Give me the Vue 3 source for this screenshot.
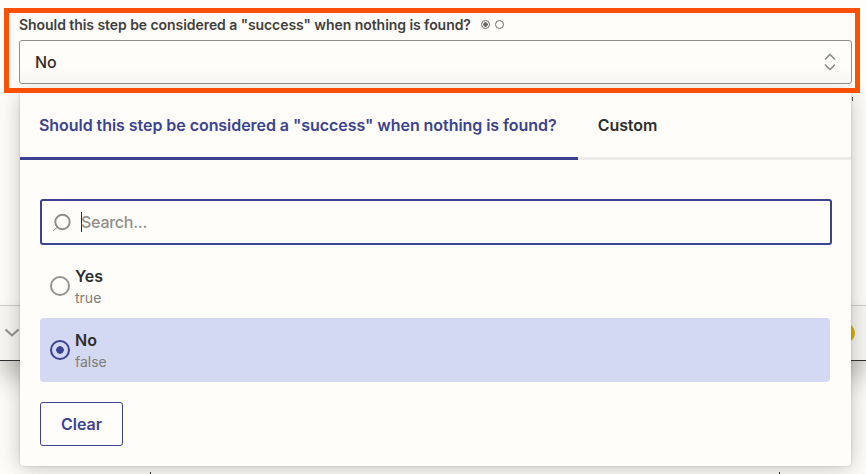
<script setup>
import { ref } from 'vue';

const title = 'Should this step be considered a "success" when nothing is found?';
const selected = ref('No');
const options = [
  { label: 'Yes', value: 'true' },
  { label: 'No', value: 'false' },
];
</script>

<template>
  <div class="page">
    <div class="field">
      <div class="label-row">
        <span class="label">{{ title }}</span>
        <span class="dots"><i class="dot dot-on"></i><i class="dot"></i></span>
      </div>
      <div class="select">
        <span>{{ selected }}</span>
        <svg width="14" height="20" viewBox="0 0 14 20" fill="none" stroke="#8f8e8a" stroke-width="1.6">
          <path d="M2 7.5 7 2.5l5 5" />
          <path d="M2 12.5l5 5 5-5" />
        </svg>
      </div>
    </div>

    <div class="behind">
      <svg width="16" height="10" viewBox="0 0 16 10" fill="none" stroke="#8f8e8a" stroke-width="2">
        <path d="M1.5 1.5 8 7.5l6.500-6" />
      </svg>
      <span class="coin"></span>
    </div>

    <!-- bits of the page underneath that peek out around the menu -->
    <span class="speck"></span>
    <span class="tick tick-left"></span>
    <span class="tick tick-right"></span>

    <div class="menu">
      <div class="tabs">
        <div class="tab tab-active">{{ title }}</div>
        <div class="tab">Custom</div>
      </div>
      <div class="search">
        <svg width="20" height="20" viewBox="0 0 20 20" fill="none" stroke="#8f8e8a" stroke-width="2">
          <circle cx="10.500" cy="10" r="7.200" />
          <path d="M5.500 15 1 19" stroke-width="1" />
        </svg>
        <span class="caret"></span>
        <span class="placeholder">Search...</span>
      </div>
      <div class="options">
        <div
          v-for="opt in options"
          :key="opt.label"
          class="option"
          :class="{ 'option-on': opt.label === selected }"
        >
          <span class="radio"></span>
          <div>
            <div class="opt-label">{{ opt.label }}</div>
            <div class="opt-value">{{ opt.value }}</div>
          </div>
        </div>
      </div>
      <button class="clear">Clear</button>
    </div>
  </div>
</template>

<style>
html, body {
  margin: 0;
  background: #fffdf9;
}
</style>

<style scoped>
.page {
  position: relative;
  width: 866px;
  height: 474px;
  overflow: hidden;
  padding-top: 8px;
  box-sizing: border-box;
  background: #fffdf9;
  font-family: Inter, "Liberation Sans", sans-serif;
  color: #2d2e2e;
}

.field {
  position: relative;
  z-index: 2;
  box-sizing: border-box;
  width: 856px;
  height: 85px;
  margin-left: 4px;
  padding: 3px 3px 0 10px;
  border: 5px solid #ff4f00;
}
.label-row {
  display: flex;
  align-items: center;
  height: 17px;
  gap: 10px;
}
.label {
  font-size: 14px;
  font-weight: 600;
  letter-spacing: -0.06px;
  color: #403f3e;
  white-space: nowrap;
}
.dots {
  display: flex;
  gap: 5px;
}
.dot {
  box-sizing: border-box;
  width: 9px;
  height: 9px;
  border: 1px solid #6b6a68;
  border-radius: 50%;
}
.dot-on {
  background: radial-gradient(circle, #6b6a68 0 2px, transparent 2.500px);
}
.select {
  display: flex;
  align-items: center;
  justify-content: space-between;
  box-sizing: border-box;
  height: 44px;
  margin-top: 7px;
  padding: 0 14px 0 15px;
  border: 1px solid #8f8e8a;
  border-radius: 3px;
  font-size: 16px;
  font-weight: 500;
  background: linear-gradient(#fffdf9 60%, #f8f6f2);
}

.behind {
  display: flex;
  align-items: center;
  justify-content: space-between;
  box-sizing: border-box;
  height: 56px;
  margin-top: 212px;
  padding: 0 11px 0 4px;
  border-top: 1px solid #cfcecb;
  border-bottom: 1px solid #2d2e2e;
  background: #f7f6f2;
  box-shadow: 0 16px 24px rgba(60, 58, 50, 0.3);
}
.coin {
  width: 20px;
  height: 20px;
  border-radius: 50%;
  background: #dcae00;
}
.speck {
  position: absolute;
  left: 852px;
  top: 97px;
  width: 1px;
  height: 4px;
  background: #55544f;
}
.tick {
  position: absolute;
  bottom: 0;
  width: 1px;
  height: 2px;
  background: #2d2e2e;
}
.tick-left {
  left: 150px;
}
.tick-right {
  left: 779px;
}

.menu {
  position: absolute;
  z-index: 1;
  left: 20px;
  top: 93px;
  box-sizing: border-box;
  width: 831px;
  height: 373px;
  padding-bottom: 20px;
  border-radius: 0 0 3px 3px;
  background: #fffdf9;
  box-shadow: 0 2px 22px rgba(60, 58, 50, 0.3), 0 0 2px rgba(60, 58, 50, 0.3);
}
.tabs {
  display: flex;
  box-sizing: border-box;
  height: 67px;
  border-bottom: 3px solid #ecebe7;
}
.tab {
  display: flex;
  align-items: center;
  box-sizing: border-box;
  height: 67px;
  padding: 0 20px;
  border-bottom: 3px solid transparent;
  font-size: 16px;
  font-weight: 600;
  letter-spacing: -0.05px;
  white-space: nowrap;
}
.tab-active {
  color: #3b4390;
  border-bottom-color: #3b4390;
  padding: 0 21px 0 19px;
}
.search {
  display: flex;
  align-items: center;
  box-sizing: border-box;
  height: 46px;
  margin: 39px 19px 0 20px;
  padding: 0 10px;
  border: 2px solid #3b4390;
  border-radius: 3px;
  font-size: 16px;
}
.caret {
  width: 1px;
  height: 20px;
  margin-left: 9px;
  background: #2d2e2e;
}
.placeholder {
  margin-left: -1px;
  color: #8f8e8a;
  font-weight: 500;
  letter-spacing: -0.25px;
}
.options {
  margin: 9px 21px 0 20px;
}
.option {
  display: flex;
  align-items: center;
  gap: 5px;
  box-sizing: border-box;
  height: 64px;
  padding: 0 10px;
  border-radius: 4px;
}
.option-on {
  background: #d3d8f3;
}
.radio {
  box-sizing: border-box;
  width: 20px;
  height: 20px;
  border: 2px solid #95948f;
  border-radius: 50%;
}
.option-on .radio {
  border-color: #3b4390;
  background: radial-gradient(circle, #3b4390 0 3.500px, transparent 4px);
}
.opt-label {
  font-size: 16px;
  font-weight: 600;
  line-height: 22px;
}
.opt-value {
  margin-top: 1px;
  font-size: 14px;
  line-height: 20px;
  color: #7d7c78;
}
.clear {
  display: block;
  box-sizing: border-box;
  width: 83px;
  height: 44px;
  margin: 20px 0 0 20px;
  border: 1px solid #3b4390;
  border-radius: 3px;
  background: transparent;
  color: #3b4390;
  font: 600 16px Inter, "Liberation Sans", sans-serif;
}
</style>
